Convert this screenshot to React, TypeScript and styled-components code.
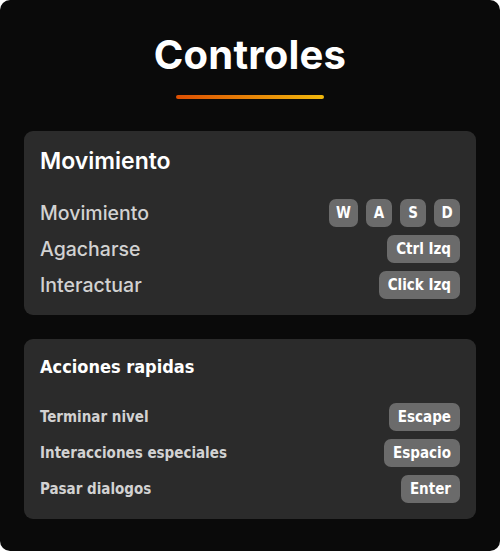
import styled, { createGlobalStyle } from "styled-components";

const GlobalStyle = createGlobalStyle`
  html, body {
    margin: 0;
    padding: 0;
    background: #ffffff;
  }
  * {
    box-sizing: border-box;
  }
`;

const Panel = styled.div`
  width: 500px;
  height: 551px;
  background: #0a0a0a;
  border-radius: 10px;
  padding: 31px 24px 32px;
  display: flex;
  flex-direction: column;
  font-family: "Inter", "Noto Sans", sans-serif;
`;

const Header = styled.div`
  display: flex;
  flex-direction: column;
  align-items: center;
  gap: 16px;
  margin-bottom: 32px;
`;

const Title = styled.h1`
  margin: 0;
  color: #ffffff;
  font-size: 40px;
  font-weight: 700;
  line-height: 48px;
  letter-spacing: 0.2px;
`;

const Underline = styled.div`
  width: 148px;
  height: 4px;
  border-radius: 2px;
  background: linear-gradient(90deg, #dd4f02 0%, #f1b80c 100%);
`;

const Sections = styled.div`
  display: flex;
  flex-direction: column;
  gap: 24px;
`;

const Card = styled.section`
  background: #2b2b2b;
  border-radius: 9px;
  padding: 16px;
  display: flex;
  flex-direction: column;
`;

const CardTitle = styled.h2<{ $alt?: boolean }>`
  margin: 0 0 24px;
  color: #ffffff;
  font-family: ${(p) =>
    p.$alt
      ? '"DejaVu Sans Condensed", "DejaVu Sans", sans-serif'
      : '"Inter", "Noto Sans", sans-serif'};
  font-size: ${(p) => (p.$alt ? "18px" : "23px")};
  font-weight: ${(p) => (p.$alt ? 700 : 600)};
  line-height: ${(p) => (p.$alt ? "24px" : "28px")};
`;

const Rows = styled.div`
  display: flex;
  flex-direction: column;
  gap: 8px;
`;

const Row = styled.div`
  display: flex;
  align-items: center;
  justify-content: space-between;
  height: 28px;
`;

const Label = styled.span<{ $small?: boolean }>`
  color: #d2d2d2;
  font-family: ${(p) =>
    p.$small
      ? '"DejaVu Sans Condensed", "DejaVu Sans", sans-serif'
      : '"Inter", "Noto Sans", sans-serif'};
  font-size: ${(p) => (p.$small ? "15px" : "19.5px")};
  font-weight: ${(p) => (p.$small ? 700 : 500)};
`;

const Keys = styled.div`
  display: flex;
  gap: 8px;
`;

const Key = styled.span<{ $square?: boolean }>`
  height: 28px;
  min-width: ${(p) => (p.$square ? "26px" : "auto")};
  padding: 0 ${(p) => (p.$square ? "7px" : "9px")};
  border-radius: 7px;
  background: #6b6b6b;
  color: #ffffff;
  font-family: "DejaVu Sans Condensed", "DejaVu Sans", sans-serif;
  font-size: 15px;
  font-weight: 700;
  display: flex;
  align-items: center;
  justify-content: center;
`;

const movement = [
  { label: "Movimiento", keys: ["W", "A", "S", "D"] },
  { label: "Agacharse", keys: ["Ctrl Izq"] },
  { label: "Interactuar", keys: ["Click Izq"] },
];

const quick = [
  { label: "Terminar nivel", keys: ["Escape"] },
  { label: "Interacciones especiales", keys: ["Espacio"] },
  { label: "Pasar dialogos", keys: ["Enter"] },
];

export default function App() {
  return (
    <>
      <GlobalStyle />
      <Panel>
        <Header>
          <Title>Controles</Title>
          <Underline />
        </Header>
        <Sections>
          <Card>
            <CardTitle>Movimiento</CardTitle>
            <Rows>
              {movement.map((r) => (
                <Row key={r.label}>
                  <Label>{r.label}</Label>
                  <Keys>
                    {r.keys.map((k) => (
                      <Key key={k} $square={k.length === 1}>
                        {k}
                      </Key>
                    ))}
                  </Keys>
                </Row>
              ))}
            </Rows>
          </Card>
          <Card>
            <CardTitle $alt>Acciones rapidas</CardTitle>
            <Rows>
              {quick.map((r) => (
                <Row key={r.label}>
                  <Label $small>{r.label}</Label>
                  <Keys>
                    {r.keys.map((k) => (
                      <Key key={k}>{k}</Key>
                    ))}
                  </Keys>
                </Row>
              ))}
            </Rows>
          </Card>
        </Sections>
      </Panel>
    </>
  );
}
